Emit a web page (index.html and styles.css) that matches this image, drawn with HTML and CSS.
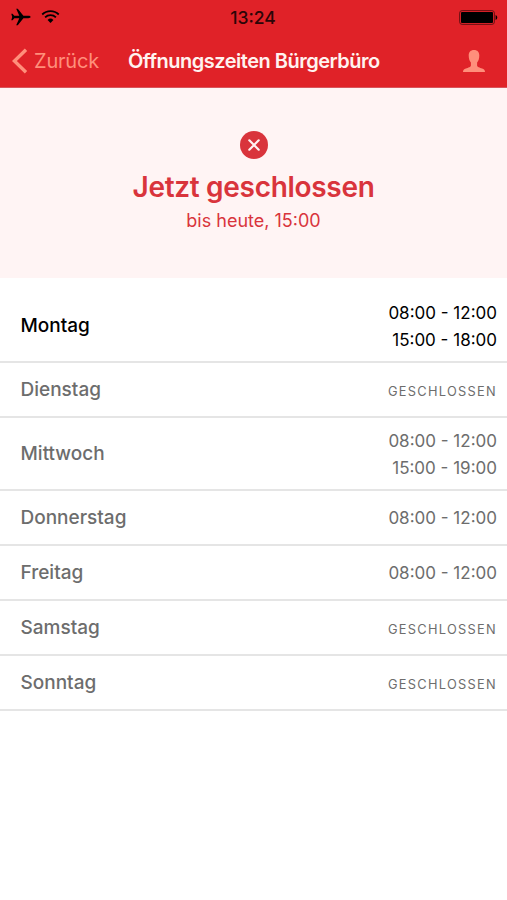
FILE: index.html
```html
<!DOCTYPE html>
<html lang="de">
<head>
    <meta charset="UTF-8">
    <meta name="viewport" content="width=device-width, initial-scale=1.0">
    <title>Öffnungszeiten Bürgerbüro</title>
    <link rel="stylesheet" href="styles.css">
</head>
<body>

<header>
    <!-- Status bar -->
    <div class="status-bar">
        <div class="status-left">
            <svg width="20" height="18" viewBox="0 0 20 18"><path d="M0.3 5.7h1.3l1.7 2.1h5L5.2 0.8h1.6l5.6 7h4.8c1.5 0 2.4.5 2.4 1.2s-.9 1.2-2.4 1.2h-4.8l-5.6 7H5.2l3.1-7h-5l-1.7 2.1H0.3L1.2 9z"/></svg>
            <svg class="wifi" width="19" height="15" viewBox="0 0 20 15"><path d="M1.3 5.4a12.3 12.3 0 0 1 17.4 0M4.3 8.5a8.1 8.1 0 0 1 11.4 0" fill="none" stroke="#000" stroke-width="1.9"/><path d="M6.9 11.2a4.4 4.4 0 0 1 6.2 0L10 14.3z"/></svg>
        </div>
        <div class="time">13:24</div>
        <div class="battery">
            <svg width="39" height="15" viewBox="0 0 39 15"><rect x="0.6" y="0.6" width="34.8" height="13.8" rx="2.5" fill="none" stroke="#6b1013" stroke-width="1"/><rect x="2" y="2" width="32" height="11" rx="1"/><path d="M36.6 5c2.2.7 2.2 4.3 0 5z"/></svg>
        </div>
    </div>

    <!-- Navigation -->
    <nav class="nav-bar">
        <a class="back" href="#">
            <svg width="16" height="26" viewBox="0 0 16 26"><path d="M14 1.7L2.4 13 14 24.3" fill="none" stroke="#ff8f7b" stroke-width="3.4"/></svg>
            <span>Zurück</span>
        </a>
        <h1>Öffnungszeiten Bürgerbüro</h1>
        <a class="profile" href="#">
            <svg width="22" height="22" viewBox="0 0 22 22"><path d="M11 0c3.5 0 5.3 2.2 5.3 5.5 0 3.1-.9 5.6-2.2 7v3.1c0 1.6 2.8 2.2 5 3 1.9.7 2.9 1.6 2.9 3.4H0c0-1.8 1-2.7 2.9-3.4 2.2-.8 5-1.4 5-3v-3.1c-1.3-1.4-2.2-3.9-2.2-7C5.7 2.2 7.5 0 11 0z"/></svg>
        </a>
    </nav>
</header>

<!-- Current state -->
<section class="status">
    <svg width="28" height="28" viewBox="0 0 28 28"><circle cx="14" cy="14" r="14" fill="#d9343c"/><path d="M9.3 9.3l9.4 9.4M18.7 9.3l-9.4 9.4" stroke="#fff3f2" stroke-width="2.2" stroke-linecap="round"/></svg>
    <h2>Jetzt geschlossen</h2>
    <p>bis heute, 15:00</p>
</section>

<!-- Opening hours -->
<ul class="hours">
    <li class="today double">
        <span class="day">Montag</span>
        <div class="times"><div>08:00 - 12:00</div><div>15:00 - 18:00</div></div>
    </li>
    <li>
        <span class="day">Dienstag</span>
        <span class="closed">Geschlossen</span>
    </li>
    <li class="double">
        <span class="day">Mittwoch</span>
        <div class="times"><div>08:00 - 12:00</div><div>15:00 - 19:00</div></div>
    </li>
    <li>
        <span class="day">Donnerstag</span>
        <div class="times">08:00 - 12:00</div>
    </li>
    <li>
        <span class="day">Freitag</span>
        <div class="times">08:00 - 12:00</div>
    </li>
    <li>
        <span class="day">Samstag</span>
        <span class="closed">Geschlossen</span>
    </li>
    <li>
        <span class="day">Sonntag</span>
        <span class="closed">Geschlossen</span>
    </li>
</ul>

</body>
</html>
```
FILE: styles.css
```css
/* General page styling */
* {
    box-sizing: border-box;
}

body {
    font-family: Inter, "Liberation Sans", sans-serif;
    margin: 0;
    background-color: #fff;
}

svg {
    display: block;
}

h1, h2, p, ul {
    margin: 0;
    padding: 0;
}

/* Header */
header {
    height: 88px;
    background-color: #e02228;
    border-bottom: 1px solid #d8555c;
}

.status-bar {
    display: grid;
    grid-template-columns: 1fr auto 1fr;
    align-items: center;
    height: 35px;
    padding: 0 9px 0 11px;
}

.status-left {
    display: flex;
    align-items: center;
    gap: 10px;
    padding-bottom: 1px;
}

.wifi {
    margin-bottom: 1px;
}

.time {
    margin-right: 3px;
    font-size: 17.5px;
    font-weight: 500;
    color: #2b0507;
}

.battery {
    justify-self: end;
}

.nav-bar {
    display: grid;
    grid-template-columns: 116px auto 1fr;
    align-items: center;
    height: 52px;
    padding: 0 22px 0 12px;
}

.back {
    display: flex;
    align-items: center;
    gap: 6px;
    color: #ff8f7b;
    font-size: 20px;
    letter-spacing: -0.2px;
    text-decoration: none;
}

.nav-bar h1 {
    font-size: 20px;
    font-weight: 600;
    letter-spacing: -0.5px;
    color: #fff3f0;
    white-space: nowrap;
}

.profile {
    justify-self: end;
    fill: #ff8f7b;
}

/* Current state */
.status {
    display: flex;
    flex-direction: column;
    align-items: center;
    height: 190px;
    padding-top: 43px;
    background-color: #fff4f4;
    color: #d9343c;
}

.status h2 {
    margin-top: 10px;
    font-size: 28px;
    line-height: 36px;
    font-weight: 600;
    letter-spacing: -0.3px;
}

.status p {
    margin-top: 4px;
    font-size: 18px;
    line-height: 24px;
}

/* Opening hours */
.hours {
    list-style-type: none;
    padding-top: 11px;
}

.hours li {
    display: flex;
    align-items: center;
    justify-content: space-between;
    height: 55px;
    padding: 0 10px 0 20.5px;
    border-bottom: 2px solid #e5e5e5;
    color: #6d6d6d;
}

.hours .double {
    height: 73px;
}

.hours .today {
    height: 74px;
    color: #000;
}

.day {
    font-size: 19px;
    font-weight: 500;
}

.times {
    padding-top: 2px;
    font-size: 17px;
    line-height: 27px;
    text-align: right;
}

.today .times {
    padding-top: 4px;
}

.closed {
    margin-top: 4px;
    font-size: 12.8px;
    letter-spacing: 1.3px;
    text-transform: uppercase;
}
```
